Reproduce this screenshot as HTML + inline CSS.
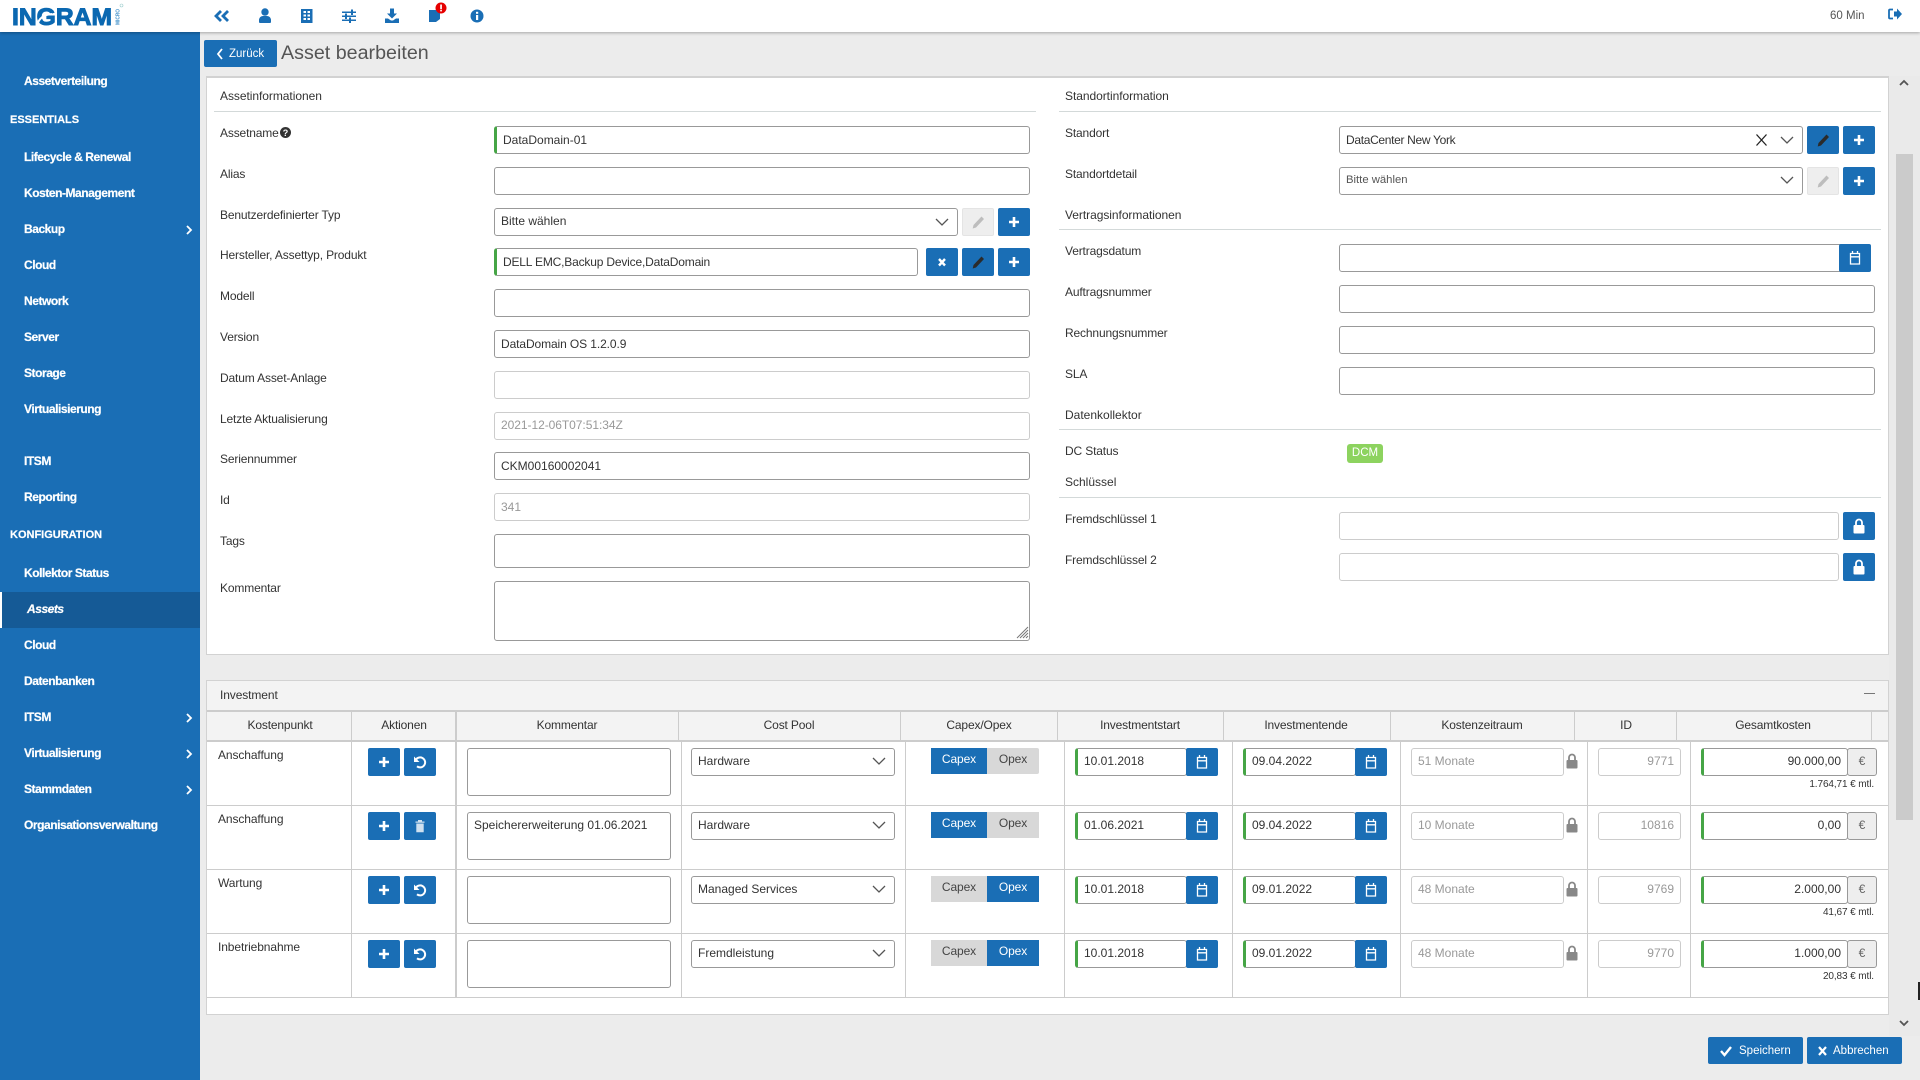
<!DOCTYPE html>
<html lang="de"><head><meta charset="utf-8"><title>Asset bearbeiten</title>
<style>
html,body{margin:0;padding:0}
body{width:1920px;height:1080px;position:relative;overflow:hidden;background:#ececec;font-family:"Liberation Sans",sans-serif;font-size:12px;color:#333}
div,span,a{position:absolute;box-sizing:border-box;white-space:nowrap}
svg{position:absolute;overflow:visible}
.l{left:220px;line-height:14px;letter-spacing:-.15px}
.lr{left:1065px;line-height:14px;letter-spacing:-.15px}
.h{line-height:14px}
.hr{position:absolute;height:1px;background:#d3d9d9}
.i{height:28px;border:1px solid #999;border-radius:3px;background:#fff;line-height:26px;padding-left:6px;color:#333}
.t{line-height:25px}
.g{border-left:3px solid #46a546}
.d{border-color:#ccc;color:#999}
.b{height:28px;width:32px;background:#1a6eb5;border-radius:2px;color:#fff}
.b svg{left:0;top:0}
.bd{background:#eee;border:1px solid #e4e4e4}
.s{font-size:12px;line-height:14px;color:#fff;left:24px;font-weight:bold;letter-spacing:-.45px;-webkit-text-stroke:.2px #fff}
.sh{left:10px;font-size:11px;letter-spacing:0;margin-top:1px}
.th{top:718px;line-height:14px;text-align:center;transform:translateX(-50%);letter-spacing:-.15px}
.vl{position:absolute;width:1px;background:#ccc}
.cx{height:26px;line-height:23px;text-align:center;color:#444;background:#d8d8d8;letter-spacing:-.1px}
.on{background:#1a6eb5;color:#fff}
</style></head><body>
<svg width="0" height="0" style="position:absolute">
<defs>
<symbol id="plus" viewBox="0 0 32 28"><path d="M16 9v10M11 14h10" stroke="#fff" stroke-width="2.600" fill="none"/></symbol>
<symbol id="pen" viewBox="0 0 32 28"><path d="M19.500 8.500l2.500 2.500-8 8.500-3.300 1 .8-3.500z" fill="#2b2b2b"/></symbol>
<symbol id="penl" viewBox="0 0 32 28"><path d="M19.500 8.500l2.500 2.500-8 8.500-3.300 1 .8-3.500z" fill="#bdbdbd"/></symbol>
<symbol id="x" viewBox="0 0 32 28"><path d="M13 11l6 6.500M19 11l-6 6.500" stroke="#fff" stroke-width="2.400" fill="none"/></symbol>
<symbol id="cal" viewBox="0 0 32 28"><path d="M11.500 9.500h9v10.500h-9zM11.500 12.800h9" stroke="#fff" stroke-width="1.300" fill="none"/><path d="M13.500 7v3M18.500 7v3" stroke="#fff" stroke-width="1.300"/></symbol>
<symbol id="undo" viewBox="0 0 32 28"><path d="M11.500 12.500a5 5 0 1 1 1.500 5.800" stroke="#fff" stroke-width="2" fill="none"/><path d="M10 8.500v5.500h5.500z" fill="#fff"/></symbol>
<symbol id="trash" viewBox="0 0 32 28"><path d="M11.500 9.500h9v1.300h-9zM14 8h4v1.500h-4zM12.300 11.500h7.400v8.800h-7.400z" fill="#cfe0ef"/></symbol>
<symbol id="lock" viewBox="0 0 12 16"><path d="M3 7.500V4.500a3 3 0 0 1 6 0V7.500" stroke="currentColor" stroke-width="1.800" fill="none"/><rect x="0.500" y="7" width="11" height="8.500" rx="1" fill="currentColor"/></symbol>
<symbol id="chev" viewBox="0 0 14 8"><path d="M1 1l6 6 6-6" stroke="#555" stroke-width="1.300" fill="none"/></symbol>
</defs></svg>

<!-- sidebar -->
<div style="left:0;top:32px;width:200px;height:1048px;background:#1a6eb5"></div>
<div style="left:0;top:592px;width:200px;height:36px;background:#155a96"></div>
<div style="left:0;top:592px;width:2px;height:36px;background:#fff"></div>
<div class="s" style="top:74px">Assetverteilung</div>
<div class="s sh" style="top:112px">ESSENTIALS</div>
<div class="s" style="top:150px">Lifecycle &amp; Renewal</div>
<div class="s" style="top:186px">Kosten-Management</div>
<div class="s" style="top:222px">Backup</div>
<div class="s" style="top:258px">Cloud</div>
<div class="s" style="top:294px">Network</div>
<div class="s" style="top:330px">Server</div>
<div class="s" style="top:366px">Storage</div>
<div class="s" style="top:402px">Virtualisierung</div>
<div class="s" style="top:454px">ITSM</div>
<div class="s" style="top:490px">Reporting</div>
<div class="s sh" style="top:527px">KONFIGURATION</div>
<div class="s" style="top:566px">Kollektor Status</div>
<div class="s" style="top:602px;left:27px;font-style:italic">Assets</div>
<div class="s" style="top:638px">Cloud</div>
<div class="s" style="top:674px">Datenbanken</div>
<div class="s" style="top:710px">ITSM</div>
<div class="s" style="top:746px">Virtualisierung</div>
<div class="s" style="top:782px">Stammdaten</div>
<div class="s" style="top:818px">Organisationsverwaltung</div>
<svg style="left:185px;top:225px" width="8" height="10"><path d="M2 1l4 4-4 4" stroke="#fff" stroke-width="1.800" fill="none"/></svg>
<svg style="left:185px;top:713px" width="8" height="10"><path d="M2 1l4 4-4 4" stroke="#fff" stroke-width="1.800" fill="none"/></svg>
<svg style="left:185px;top:749px" width="8" height="10"><path d="M2 1l4 4-4 4" stroke="#fff" stroke-width="1.800" fill="none"/></svg>
<svg style="left:185px;top:785px" width="8" height="10"><path d="M2 1l4 4-4 4" stroke="#fff" stroke-width="1.800" fill="none"/></svg>

<!-- header -->
<div style="left:0;top:0;width:1920px;height:32px;background:#fff;box-shadow:0 1px 3px rgba(0,0,0,.3)"></div>
<svg style="left:0;top:0" width="1920" height="32">
<text x="12" y="25" font-family="Liberation Sans" font-weight="bold" font-size="24" fill="#0b68b1" stroke="#0b68b1" stroke-width="1" textLength="100" lengthAdjust="spacingAndGlyphs">INGRAM</text>
<path d="M37 26Q39 15 52 14" stroke="#fff" stroke-width="2" fill="none"/>
<text transform="translate(119.500,25) rotate(-90)" font-family="Liberation Sans" font-weight="bold" font-size="5.500" fill="#3f8fc9" textLength="16" lengthAdjust="spacingAndGlyphs">MICRO</text>
<circle cx="121.500" cy="5.500" r="1.500" fill="none" stroke="#9cc" stroke-width=".6"/>
<g fill="#1a6eb5">
<path d="M221 11l-5 5 5 5M228 11l-5 5 5 5" stroke="#1a6eb5" stroke-width="2.800" fill="none"/>
<circle cx="265" cy="12" r="3.700"/><path d="M259 22v-2.500a4 4 0 0 1 4-3.500h4a4 4 0 0 1 4 3.500V22a1 1 0 0 1-1 1h-10a1 1 0 0 1-1-1z"/>
<path d="M301 9h11.500v14h-11.500z"/><path d="M303.500 11h2.500v2h-2.500zM307.500 11h2.500v2h-2.500zM303.500 14.500h2.500v2h-2.500zM307.500 14.500h2.500v2h-2.500zM303.500 18h2.500v2h-2.500zM307.500 18h2.500v2h-2.500z" fill="#fff"/>
<path d="M342 11.500h14v1.500h-14zM342 15.500h14v1.500h-14zM342 19.500h14v1.500h-14z"/><rect x="351" y="9.500" width="2" height="5.500"/><rect x="345" y="13.500" width="2" height="5.500"/><rect x="349" y="17.500" width="2" height="5.500"/>
<path d="M390 8.500h4v5h3l-5 5-5-5h3z"/><path d="M385 18.500h3l3 2h2l3-2h3v4.500h-14z"/>
<path d="M429 10h11v9l-4 3h-7z"/>
<circle cx="477" cy="16" r="6.500"/><rect x="476" y="15" width="2.200" height="5" fill="#fff"/><rect x="476" y="11.800" width="2.200" height="2" fill="#fff"/>
<path d="M1893 9.500h-3a1 1 0 0 0-1 1v7a1 1 0 0 0 1 1h3" stroke="#1a6eb5" stroke-width="1.800" fill="none"/>
<path d="M1894 11.500h3V8.500l5 5.500-5 5.500v-3h-3z"/>
</g>
<circle cx="441" cy="8" r="5.500" fill="#e60000"/><rect x="440.200" y="4.500" width="1.700" height="4.500" fill="#fff"/><rect x="440.200" y="9.700" width="1.700" height="1.700" fill="#fff"/>
</svg>
<div style="left:1830px;top:9px;font-size:11.500px;line-height:14px;color:#555">60 Min</div>

<!-- title bar -->
<div style="left:204px;top:40px;width:73px;height:27px;background:#1a6eb5;border-radius:2px"></div>
<svg style="left:216px;top:48px" width="8" height="12"><path d="M6 1l-4 5 4 5" stroke="#fff" stroke-width="1.800" fill="none"/></svg>
<div style="left:229px;top:47px;line-height:14px;font-size:11.500px;color:#fff">Zurück</div>
<div style="left:281px;top:41px;font-size:19.700px;line-height:24px;color:#555">Asset bearbeiten</div>

<!-- scrollbar -->
<div style="left:1889px;top:76px;width:31px;height:960px;background:#eaeaea"></div>
<div style="left:1896px;top:154px;width:17px;height:666px;background:#cbcbcb"></div>
<svg style="left:1899px;top:79px" width="10" height="8"><path d="M1 6l4-4 4 4" stroke="#555" stroke-width="1.800" fill="none"/></svg>
<svg style="left:1899px;top:1019px" width="10" height="8"><path d="M1 2l4 4 4-4" stroke="#555" stroke-width="1.800" fill="none"/></svg>
<div style="left:1918px;top:982px;width:2px;height:18px;background:#222"></div>

<!-- top panel -->
<div style="left:206px;top:76px;width:1683px;height:579px;background:#fff;border:1px solid #d2d2d2;border-top-width:2px"></div>
<div class="h" style="left:220px;top:89px;letter-spacing:-.05px">Assetinformationen</div>
<div class="hr" style="left:214px;top:111px;width:822px"></div>
<div class="h" style="left:1065px;top:89px;letter-spacing:-.05px">Standortinformation</div>
<div class="hr" style="left:1059px;top:111px;width:822px"></div>

<div class="l" style="top:126px">Assetname</div>
<svg style="left:280px;top:127px" width="11" height="11"><circle cx="5.500" cy="5.500" r="5.500" fill="#333"/><text x="5.500" y="9" text-anchor="middle" fill="#fff" font-size="9" font-weight="bold" font-family="Liberation Sans">?</text></svg>
<div class="l" style="top:167px">Alias</div>
<div class="l" style="top:208px">Benutzerdefinierter Typ</div>
<div class="l" style="top:248px">Hersteller, Assettyp, Produkt</div>
<div class="l" style="top:289px">Modell</div>
<div class="l" style="top:330px">Version</div>
<div class="l" style="top:371px">Datum Asset-Anlage</div>
<div class="l" style="top:412px">Letzte Aktualisierung</div>
<div class="l" style="top:452px">Seriennummer</div>
<div class="l" style="top:493px">Id</div>
<div class="l" style="top:534px">Tags</div>
<div class="l" style="top:581px">Kommentar</div>

<div class="i g" style="left:494px;top:126px;width:536px">DataDomain-01</div>
<div class="i" style="left:494px;top:167px;width:536px"></div>
<div class="i t" style="left:494px;top:208px;width:464px">Bitte wählen</div>
<svg style="left:935px;top:218px" width="14" height="8"><use href="#chev"/></svg>
<div class="b bd" style="left:962px;top:208px"><svg width="32" height="28" style="left:-1px;top:-1px"><use href="#penl"/></svg></div>
<div class="b" style="left:998px;top:208px"><svg width="32" height="28"><use href="#plus"/></svg></div>
<div class="i g" style="left:494px;top:248px;width:424px;letter-spacing:-.18px">DELL EMC,Backup Device,DataDomain</div>
<div class="b" style="left:926px;top:248px"><svg width="32" height="28"><use href="#x"/></svg></div>
<div class="b" style="left:962px;top:248px"><svg width="32" height="28"><use href="#pen"/></svg></div>
<div class="b" style="left:998px;top:248px"><svg width="32" height="28"><use href="#plus"/></svg></div>
<div class="i" style="left:494px;top:289px;width:536px"></div>
<div class="i" style="left:494px;top:330px;width:536px;letter-spacing:-.1px">DataDomain OS 1.2.0.9</div>
<div class="i d" style="left:494px;top:371px;width:536px"></div>
<div class="i d t" style="left:494px;top:412px;width:536px;letter-spacing:-.05px">2021-12-06T07:51:34Z</div>
<div class="i" style="left:494px;top:452px;width:536px">CKM00160002041</div>
<div class="i d" style="left:494px;top:493px;width:536px">341</div>
<div class="i" style="left:494px;top:534px;width:536px;height:34px"></div>
<div class="i" style="left:494px;top:581px;width:536px;height:60px"></div>
<svg style="left:1015px;top:625px" width="14" height="14"><path d="M2 13L13 2M5 13L13 5M8 13L13 8M11 13l2-2" stroke="#777" stroke-width="1"/></svg>

<div class="lr" style="top:126px">Standort</div>
<div class="lr" style="top:167px">Standortdetail</div>
<div class="h" style="left:1065px;top:208px;letter-spacing:-.05px">Vertragsinformationen</div>
<div class="hr" style="left:1059px;top:229px;width:822px"></div>
<div class="lr" style="top:244px">Vertragsdatum</div>
<div class="lr" style="top:285px">Auftragsnummer</div>
<div class="lr" style="top:326px">Rechnungsnummer</div>
<div class="lr" style="top:367px">SLA</div>
<div class="h" style="left:1065px;top:408px">Datenkollektor</div>
<div class="hr" style="left:1059px;top:429px;width:822px"></div>
<div class="lr" style="top:444px">DC Status</div>
<div class="h" style="left:1065px;top:475px">Schlüssel</div>
<div class="hr" style="left:1059px;top:497px;width:822px"></div>
<div class="lr" style="top:512px">Fremdschlüssel 1</div>
<div class="lr" style="top:553px">Fremdschlüssel 2</div>

<div class="i" style="left:1339px;top:126px;width:464px;letter-spacing:-.32px">DataCenter New York</div>
<svg style="left:1755px;top:133px" width="13" height="14"><path d="M1.500 1.500l10 11M11.500 1.500l-10 11" stroke="#222" stroke-width="1.300" fill="none"/></svg>
<svg style="left:1780px;top:136px" width="14" height="8"><use href="#chev"/></svg>
<div class="b" style="left:1807px;top:126px"><svg width="32" height="28"><use href="#pen"/></svg></div>
<div class="b" style="left:1843px;top:126px"><svg width="32" height="28"><use href="#plus"/></svg></div>
<div class="i" style="left:1339px;top:167px;width:464px;color:#555;font-size:11.300px;line-height:25px">Bitte wählen</div>
<svg style="left:1780px;top:176px" width="14" height="8"><use href="#chev"/></svg>
<div class="b bd" style="left:1807px;top:167px"><svg width="32" height="28" style="left:-1px;top:-1px"><use href="#penl"/></svg></div>
<div class="b" style="left:1843px;top:167px"><svg width="32" height="28"><use href="#plus"/></svg></div>
<div class="i" style="left:1339px;top:244px;width:505px"></div>
<div class="b" style="left:1839px;top:244px"><svg width="32" height="28"><use href="#cal"/></svg></div>
<div class="i" style="left:1339px;top:285px;width:536px"></div>
<div class="i" style="left:1339px;top:326px;width:536px"></div>
<div class="i" style="left:1339px;top:367px;width:536px"></div>
<div style="left:1347px;top:444px;width:36px;height:19px;background:#8dd35f;border-radius:3px;color:#fff;text-align:center;font-size:11.500px;line-height:19px">DCM</div>
<div class="i d" style="left:1339px;top:512px;width:500px"></div>
<div class="b" style="left:1843px;top:512px"><svg style="left:10px;top:6px;color:#fff" width="12" height="16"><use href="#lock"/></svg></div>
<div class="i d" style="left:1339px;top:553px;width:500px"></div>
<div class="b" style="left:1843px;top:553px"><svg style="left:10px;top:6px;color:#fff" width="12" height="16"><use href="#lock"/></svg></div>

<!-- investment panel -->
<div style="left:206px;top:680px;width:1683px;height:335px;background:#fff;border:1px solid #d2d2d2;border-top-width:1px"></div>
<div style="left:207px;top:681px;width:1681px;height:59px;background:#f3f3f3"></div>
<div style="left:207px;top:710px;width:1681px;height:2px;background:#ccc"></div>
<div style="left:207px;top:740px;width:1681px;height:2px;background:#ccc"></div>
<div class="h" style="left:220px;top:688px;letter-spacing:-.1px">Investment</div>
<div style="left:1864px;top:693px;width:11px;height:1px;background:#777"></div>
<div class="th" style="left:280px">Kostenpunkt</div>
<div class="th" style="left:404px">Aktionen</div>
<div class="th" style="left:567px">Kommentar</div>
<div class="th" style="left:789px">Cost Pool</div>
<div class="th" style="left:979px">Capex/Opex</div>
<div class="th" style="left:1140px">Investmentstart</div>
<div class="th" style="left:1306px">Investmentende</div>
<div class="th" style="left:1482px">Kostenzeitraum</div>
<div class="th" style="left:1626px">ID</div>
<div class="th" style="left:1773px">Gesamtkosten</div>
<!-- header separators -->
<div class="vl" style="left:351px;top:712px;height:28px"></div>
<div class="vl" style="left:455px;top:712px;height:28px;width:2px"></div>
<div class="vl" style="left:678px;top:712px;height:28px"></div>
<div class="vl" style="left:900px;top:712px;height:28px"></div>
<div class="vl" style="left:1057px;top:712px;height:28px"></div>
<div class="vl" style="left:1223px;top:712px;height:28px"></div>
<div class="vl" style="left:1390px;top:712px;height:28px"></div>
<div class="vl" style="left:1574px;top:712px;height:28px"></div>
<div class="vl" style="left:1676px;top:712px;height:28px"></div>
<div class="vl" style="left:1871px;top:712px;height:28px"></div>
<!-- body separators -->
<div class="vl" style="left:351px;top:742px;height:255px"></div>
<div class="vl" style="left:455px;top:742px;height:255px;width:2px"></div>
<div class="vl" style="left:681px;top:742px;height:255px"></div>
<div class="vl" style="left:905px;top:742px;height:255px"></div>
<div class="vl" style="left:1064px;top:742px;height:255px"></div>
<div class="vl" style="left:1232px;top:742px;height:255px"></div>
<div class="vl" style="left:1400px;top:742px;height:255px"></div>
<div class="vl" style="left:1587px;top:742px;height:255px"></div>
<div class="vl" style="left:1690px;top:742px;height:255px"></div>
<div style="left:207px;top:805px;width:1681px;height:1px;background:#ccc"></div>
<div style="left:207px;top:869px;width:1681px;height:1px;background:#ccc"></div>
<div style="left:207px;top:933px;width:1681px;height:1px;background:#ccc"></div>
<div style="left:207px;top:997px;width:1681px;height:1px;background:#ccc"></div>

<!-- row 1 -->
<div class="h" style="left:218px;top:748px;letter-spacing:-.1px">Anschaffung</div>
<div class="b" style="left:368px;top:748px"><svg width="32" height="28"><use href="#plus"/></svg></div>
<div class="b" style="left:404px;top:748px"><svg width="32" height="28"><use href="#undo"/></svg></div>
<div class="i t" style="left:467px;top:748px;width:204px;height:48px"></div>
<div class="i t" style="left:691px;top:748px;width:204px">Hardware</div>
<svg style="left:872px;top:757px" width="14" height="8"><use href="#chev"/></svg>
<div class="cx on" style="left:931px;top:748px;width:56px">Capex</div>
<div class="cx" style="left:987px;top:748px;width:52px;border-radius:0 2px 2px 0">Opex</div>
<div class="i g t" style="left:1075px;top:748px;width:112px">10.01.2018</div>
<div class="b" style="left:1186px;top:748px"><svg width="32" height="28"><use href="#cal"/></svg></div>
<div class="i g t" style="left:1243px;top:748px;width:113px">09.04.2022</div>
<div class="b" style="left:1355px;top:748px"><svg width="32" height="28"><use href="#cal"/></svg></div>
<div class="i d t" style="left:1411px;top:748px;width:153px">51 Monate</div>
<svg style="left:1566px;top:753px;color:#888" width="12" height="16"><use href="#lock"/></svg>
<div class="i d t" style="left:1598px;top:748px;width:83px;text-align:right;padding-right:6px">9771</div>
<div class="i g t" style="left:1701px;top:748px;width:147px;text-align:right;padding-right:6px">90.000,00</div>
<div class="i t" style="left:1847px;top:748px;width:30px;background:#eee;text-align:center;padding:0;color:#666">€</div>
<div style="right:46px;top:779px;font-size:10px;line-height:12px;letter-spacing:-.1px">1.764,71 € mtl.</div>

<!-- row 2 -->
<div class="h" style="left:218px;top:812px;letter-spacing:-.1px">Anschaffung</div>
<div class="b" style="left:368px;top:812px"><svg width="32" height="28"><use href="#plus"/></svg></div>
<div class="b" style="left:404px;top:812px"><svg width="32" height="28"><use href="#trash"/></svg></div>
<div class="i t" style="left:467px;top:812px;width:204px;height:48px">Speichererweiterung 01.06.2021</div>
<div class="i t" style="left:691px;top:812px;width:204px">Hardware</div>
<svg style="left:872px;top:821px" width="14" height="8"><use href="#chev"/></svg>
<div class="cx on" style="left:931px;top:812px;width:56px">Capex</div>
<div class="cx" style="left:987px;top:812px;width:52px">Opex</div>
<div class="i g t" style="left:1075px;top:812px;width:112px">01.06.2021</div>
<div class="b" style="left:1186px;top:812px"><svg width="32" height="28"><use href="#cal"/></svg></div>
<div class="i g t" style="left:1243px;top:812px;width:113px">09.04.2022</div>
<div class="b" style="left:1355px;top:812px"><svg width="32" height="28"><use href="#cal"/></svg></div>
<div class="i d t" style="left:1411px;top:812px;width:153px">10 Monate</div>
<svg style="left:1566px;top:817px;color:#888" width="12" height="16"><use href="#lock"/></svg>
<div class="i d t" style="left:1598px;top:812px;width:83px;text-align:right;padding-right:6px">10816</div>
<div class="i g t" style="left:1701px;top:812px;width:147px;text-align:right;padding-right:6px">0,00</div>
<div class="i t" style="left:1847px;top:812px;width:30px;background:#eee;text-align:center;padding:0;color:#666">€</div>

<!-- row 3 -->
<div class="h" style="left:218px;top:876px;letter-spacing:-.1px">Wartung</div>
<div class="b" style="left:368px;top:876px"><svg width="32" height="28"><use href="#plus"/></svg></div>
<div class="b" style="left:404px;top:876px"><svg width="32" height="28"><use href="#undo"/></svg></div>
<div class="i t" style="left:467px;top:876px;width:204px;height:48px"></div>
<div class="i t" style="left:691px;top:876px;width:204px">Managed Services</div>
<svg style="left:872px;top:885px" width="14" height="8"><use href="#chev"/></svg>
<div class="cx" style="left:931px;top:876px;width:56px">Capex</div>
<div class="cx on" style="left:987px;top:876px;width:52px">Opex</div>
<div class="i g t" style="left:1075px;top:876px;width:112px">10.01.2018</div>
<div class="b" style="left:1186px;top:876px"><svg width="32" height="28"><use href="#cal"/></svg></div>
<div class="i g t" style="left:1243px;top:876px;width:113px">09.01.2022</div>
<div class="b" style="left:1355px;top:876px"><svg width="32" height="28"><use href="#cal"/></svg></div>
<div class="i d t" style="left:1411px;top:876px;width:153px">48 Monate</div>
<svg style="left:1566px;top:881px;color:#888" width="12" height="16"><use href="#lock"/></svg>
<div class="i d t" style="left:1598px;top:876px;width:83px;text-align:right;padding-right:6px">9769</div>
<div class="i g t" style="left:1701px;top:876px;width:147px;text-align:right;padding-right:6px">2.000,00</div>
<div class="i t" style="left:1847px;top:876px;width:30px;background:#eee;text-align:center;padding:0;color:#666">€</div>
<div style="right:46px;top:907px;font-size:10px;line-height:12px;letter-spacing:-.1px">41,67 € mtl.</div>

<!-- row 4 -->
<div class="h" style="left:218px;top:940px;letter-spacing:-.1px">Inbetriebnahme</div>
<div class="b" style="left:368px;top:940px"><svg width="32" height="28"><use href="#plus"/></svg></div>
<div class="b" style="left:404px;top:940px"><svg width="32" height="28"><use href="#undo"/></svg></div>
<div class="i t" style="left:467px;top:940px;width:204px;height:48px"></div>
<div class="i t" style="left:691px;top:940px;width:204px">Fremdleistung</div>
<svg style="left:872px;top:949px" width="14" height="8"><use href="#chev"/></svg>
<div class="cx" style="left:931px;top:940px;width:56px">Capex</div>
<div class="cx on" style="left:987px;top:940px;width:52px">Opex</div>
<div class="i g t" style="left:1075px;top:940px;width:112px">10.01.2018</div>
<div class="b" style="left:1186px;top:940px"><svg width="32" height="28"><use href="#cal"/></svg></div>
<div class="i g t" style="left:1243px;top:940px;width:113px">09.01.2022</div>
<div class="b" style="left:1355px;top:940px"><svg width="32" height="28"><use href="#cal"/></svg></div>
<div class="i d t" style="left:1411px;top:940px;width:153px">48 Monate</div>
<svg style="left:1566px;top:945px;color:#888" width="12" height="16"><use href="#lock"/></svg>
<div class="i d t" style="left:1598px;top:940px;width:83px;text-align:right;padding-right:6px">9770</div>
<div class="i g t" style="left:1701px;top:940px;width:147px;text-align:right;padding-right:6px">1.000,00</div>
<div class="i t" style="left:1847px;top:940px;width:30px;background:#eee;text-align:center;padding:0;color:#666">€</div>
<div style="right:46px;top:971px;font-size:10px;line-height:12px;letter-spacing:-.1px">20,83 € mtl.</div>

<!-- footer buttons -->
<div style="left:1708px;top:1037px;width:95px;height:27px;background:#1a6eb5;border-radius:2px"></div>
<svg style="left:1720px;top:1045px" width="12" height="12"><path d="M1 6l3.500 4L11 2" stroke="#fff" stroke-width="2.400" fill="none"/></svg>
<div style="left:1739px;top:1044px;line-height:14px;color:#fff;font-size:11.500px">Speichern</div>
<div style="left:1807px;top:1037px;width:95px;height:27px;background:#1a6eb5;border-radius:2px"></div>
<svg style="left:1818px;top:1046px" width="10" height="10"><path d="M1 1l7 8M8 1L1 9" stroke="#fff" stroke-width="2.200" fill="none"/></svg>
<div style="left:1833px;top:1044px;line-height:14px;color:#fff;font-size:11.500px">Abbrechen</div>
</body></html>
